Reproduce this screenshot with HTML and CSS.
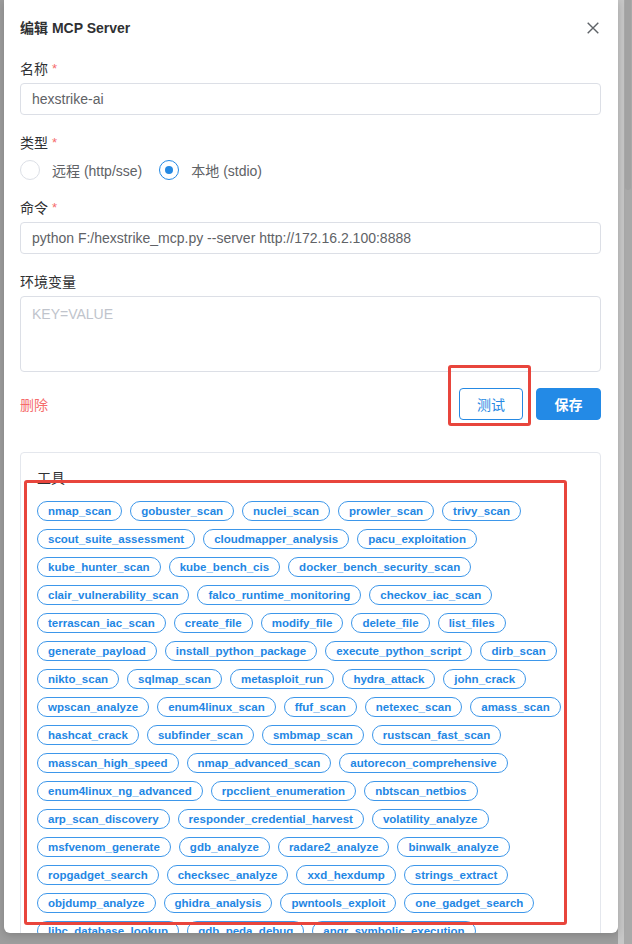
FILE: index.html
```html
<!DOCTYPE html>
<html>
    <head>
        <title>编辑 MCP Server</title>
        <meta charset="UTF-8">
        <meta name="viewport" content="width=device-width">
        <link rel="stylesheet" href="styles.css">
    </head>
    <body>
        <div class="overlay">
            <div class="dialog">
                <div class="dialog-header">
                    <span class="dialog-title">编辑 MCP Server</span>
                    <svg class="close" width="12" height="12" viewBox="0 0 12 12">
                        <path d="M0.7 0.7L11.3 11.3M11.3 0.7L0.7 11.3" stroke="#5f6368" stroke-width="1.4" fill="none"/>
                    </svg>
                </div>
                <div class="dialog-body">
                    <div class="field">
                        <div class="label">名称 <span class="req">*</span></div>
                        <input class="input" type="text" value="hexstrike-ai">
                    </div>
                    <div class="field">
                        <div class="label">类型 <span class="req">*</span></div>
                        <div class="radios">
                            <label class="radio"><span class="dot"></span>远程 (http/sse)</label>
                            <label class="radio checked"><span class="dot"></span>本地 (stdio)</label>
                        </div>
                    </div>
                    <div class="field">
                        <div class="label">命令 <span class="req">*</span></div>
                        <input class="input" type="text" value="python F:/hexstrike_mcp.py --server http://172.16.2.100:8888">
                    </div>
                    <div class="field field-env">
                        <div class="label">环境变量</div>
                        <textarea class="textarea" placeholder="KEY=VALUE"></textarea>
                    </div>
                    <div class="actions">
                        <a class="link-danger" href="#">删除</a>
                        <div class="buttons">
                            <button class="btn btn-plain">测试</button>
                            <button class="btn btn-primary">保存</button>
                        </div>
                    </div>
                    <div class="tools">
                        <div class="tools-title">工具</div>
                        <div class="tags">
                            <span class="tag">nmap_scan</span>
                            <span class="tag">gobuster_scan</span>
                            <span class="tag">nuclei_scan</span>
                            <span class="tag">prowler_scan</span>
                            <span class="tag">trivy_scan</span>
                            <span class="tag">scout_suite_assessment</span>
                            <span class="tag">cloudmapper_analysis</span>
                            <span class="tag">pacu_exploitation</span>
                            <span class="tag">kube_hunter_scan</span>
                            <span class="tag">kube_bench_cis</span>
                            <span class="tag">docker_bench_security_scan</span>
                            <span class="tag">clair_vulnerability_scan</span>
                            <span class="tag">falco_runtime_monitoring</span>
                            <span class="tag">checkov_iac_scan</span>
                            <span class="tag">terrascan_iac_scan</span>
                            <span class="tag">create_file</span>
                            <span class="tag">modify_file</span>
                            <span class="tag">delete_file</span>
                            <span class="tag">list_files</span>
                            <span class="tag">generate_payload</span>
                            <span class="tag">install_python_package</span>
                            <span class="tag">execute_python_script</span>
                            <span class="tag">dirb_scan</span>
                            <span class="tag">nikto_scan</span>
                            <span class="tag">sqlmap_scan</span>
                            <span class="tag">metasploit_run</span>
                            <span class="tag">hydra_attack</span>
                            <span class="tag">john_crack</span>
                            <span class="tag">wpscan_analyze</span>
                            <span class="tag">enum4linux_scan</span>
                            <span class="tag">ffuf_scan</span>
                            <span class="tag">netexec_scan</span>
                            <span class="tag">amass_scan</span>
                            <span class="tag">hashcat_crack</span>
                            <span class="tag">subfinder_scan</span>
                            <span class="tag">smbmap_scan</span>
                            <span class="tag">rustscan_fast_scan</span>
                            <span class="tag">masscan_high_speed</span>
                            <span class="tag">nmap_advanced_scan</span>
                            <span class="tag">autorecon_comprehensive</span>
                            <span class="tag">enum4linux_ng_advanced</span>
                            <span class="tag">rpcclient_enumeration</span>
                            <span class="tag">nbtscan_netbios</span>
                            <span class="tag">arp_scan_discovery</span>
                            <span class="tag">responder_credential_harvest</span>
                            <span class="tag">volatility_analyze</span>
                            <span class="tag">msfvenom_generate</span>
                            <span class="tag">gdb_analyze</span>
                            <span class="tag">radare2_analyze</span>
                            <span class="tag">binwalk_analyze</span>
                            <span class="tag">ropgadget_search</span>
                            <span class="tag">checksec_analyze</span>
                            <span class="tag">xxd_hexdump</span>
                            <span class="tag">strings_extract</span>
                            <span class="tag">objdump_analyze</span>
                            <span class="tag">ghidra_analysis</span>
                            <span class="tag">pwntools_exploit</span>
                            <span class="tag">one_gadget_search</span>
                            <span class="tag">libc_database_lookup</span>
                            <span class="tag">gdb_peda_debug</span>
                            <span class="tag">angr_symbolic_execution</span>
                        </div>
                    </div>
                </div>
                <!-- highlight boxes drawn over the screenshot -->
                <div class="mark mark-test"></div>
                <div class="mark mark-tools"></div>
            </div>
            <div class="scrollbar"><div class="thumb"></div></div>
        </div>
    </body>
</html>
```

FILE: styles.css
```css
html, body
{
    margin: 0;
    padding: 0;
}
body
{
    font-family: "Liberation Sans", "Noto Sans CJK SC", sans-serif;
    font-size: 14px;
    color: #303133;
}
.overlay
{
    display: flex;
    height: 944px;
    padding-left: 4px;
    background: #9d9d9d;
    box-sizing: border-box;
    overflow: hidden;
}
.dialog
{
    position: relative;
    width: 614px;
    height: 933px;
    background: #fff;
    border-radius: 0 0 6px 6px;
    box-shadow: 0 2px 8px rgba(0, 0, 0, 0.18);
    overflow: hidden;
}
.dialog-header
{
    display: flex;
    align-items: center;
    justify-content: space-between;
    height: 20px;
    padding: 18px 19px 20px 16px;
}
.dialog-title
{
    font-weight: bold;
    font-size: 14px;
    line-height: 20px;
    color: #303133;
}
.close
{
    display: block;
}
.dialog-body
{
    padding: 0 17px 0 16px;
}
.field
{
    margin-bottom: 17px;
}
.field-env
{
    margin-bottom: 16px;
}
.label
{
    display: flex;
    align-items: center;
    gap: 4px;
    height: 20px;
    margin-bottom: 5px;
    color: #303133;
}
.req
{
    color: #f56c6c;
    font-size: 13px;
    line-height: 1;
}
.input
{
    display: block;
    width: 100%;
    height: 32px;
    box-sizing: border-box;
    border: 1px solid #dcdfe6;
    border-radius: 4px;
    padding: 0 11px;
    font-family: "Liberation Sans", "Noto Sans CJK SC", sans-serif;
    font-size: 14px;
    color: #606266;
    outline: none;
}
.textarea
{
    display: block;
    width: 100%;
    height: 76px;
    box-sizing: border-box;
    border: 1px solid #dcdfe6;
    border-radius: 4px;
    padding: 7px 11px;
    font-family: "Liberation Sans", "Noto Sans CJK SC", sans-serif;
    font-size: 14px;
    line-height: 20px;
    color: #606266;
    resize: none;
    outline: none;
}
.textarea::placeholder
{
    color: #c0c4cc;
}
.radios
{
    display: flex;
    gap: 17px;
    height: 20px;
    margin-top: 8px;
}
.radio
{
    display: flex;
    align-items: center;
    gap: 12px;
    height: 20px;
    color: #606266;
}
.dot
{
    width: 20px;
    height: 20px;
    box-sizing: border-box;
    border: 1px solid #dcdfe6;
    border-radius: 50%;
    position: relative;
}
.radio.checked .dot
{
    border-color: #2589e3;
}
.radio.checked .dot::after
{
    content: "";
    position: absolute;
    left: 5px;
    top: 5px;
    width: 8px;
    height: 8px;
    border-radius: 50%;
    background: #2589e3;
}
.actions
{
    display: flex;
    align-items: center;
    justify-content: space-between;
    height: 32px;
    margin-bottom: 32px;
}
.link-danger
{
    color: #f56c6c;
    text-decoration: none;
}
.buttons
{
    display: flex;
    gap: 13px;
}
.btn
{
    height: 32px;
    padding: 0;
    border-radius: 4px;
    font-family: "Liberation Sans", "Noto Sans CJK SC", sans-serif;
    font-size: 14px;
    cursor: pointer;
}
.btn-plain
{
    background: #fff;
    border: 1px solid #2589e3;
    color: #2589e3;
    width: 64px;
}
.btn-primary
{
    background: #238ae6;
    border: 1px solid #238ae6;
    color: #fff;
    font-weight: bold;
    width: 65px;
}
.tools
{
    border: 1px solid #e4e7ed;
    border-radius: 4px;
    padding: 15px 10px 16px 16px;
}
.tools-title
{
    height: 20px;
    line-height: 20px;
    margin-bottom: 13px;
    color: #303133;
}
.tags
{
    display: flex;
    flex-wrap: wrap;
    gap: 8px;
}
.tag
{
    display: inline-block;
    height: 20px;
    line-height: 18px;
    box-sizing: border-box;
    padding: 0 10px;
    border: 1px solid #3d97ea;
    border-radius: 10px;
    font-size: 11.5px;
    font-weight: bold;
    color: #1f87e4;
    white-space: nowrap;
}
.mark
{
    position: absolute;
    border: 3px solid #e8453c;
    border-radius: 3px;
    box-sizing: border-box;
    pointer-events: none;
}
.mark-test
{
    left: 444px;
    top: 365px;
    width: 83px;
    height: 61px;
}
.mark-tools
{
    left: 20px;
    top: 480px;
    width: 543px;
    height: 445px;
}
.scrollbar
{
    width: 14px;
    height: 944px;
    background: #a9a9a9;
    border-left: 6px solid #c7c7c7;
    box-sizing: border-box;
    margin-left: auto;
}
.thumb
{
    height: 190px;
    margin: 0 1px;
    border-radius: 0 0 4px 4px;
    background: #a2a2a2;
}
```
